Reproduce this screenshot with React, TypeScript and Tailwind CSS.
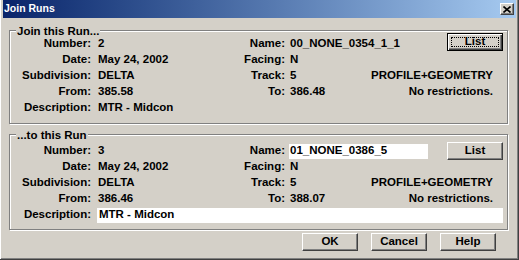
import React from "react";

const raised =
  "border border-t-white border-l-white border-r-[#404040] border-b-[#404040] shadow-[inset_-1px_-1px_0_#808080]";

function Btn({ label, focused, className = "" }: { label: string; focused?: boolean; className?: string }) {
  if (focused) {
    return (
      <div
        className={`relative flex items-center justify-center h-[18px] w-[56px] border border-black shadow-[inset_1px_1px_0_#ffffff,inset_-1px_-1px_0_#404040,inset_-2px_-2px_0_#808080] ${className}`}
      >
        <span className="absolute inset-[3px] border border-dotted border-black" />
        <span className="relative leading-none">{label}</span>
      </div>
    );
  }
  return (
    <div className={`flex items-center justify-center h-[18px] w-[56px] ${raised} ${className}`}>
      <span className="leading-none">{label}</span>
    </div>
  );
}

type Row = {
  l1: string;
  v1: React.ReactNode;
  l2?: string;
  v2?: React.ReactNode;
  right?: React.ReactNode;
};

function Group({
  legend,
  rows,
  className,
}: {
  legend: string;
  rows: Row[];
  className: string;
}) {
  return (
    <div
      className={`relative ml-[6px] w-[499px] border border-[#808080] shadow-[1px_1px_0_#ffffff,inset_1px_1px_0_#ffffff] ${className}`}
    >
      <span className="absolute top-[-8px] left-[6px] px-[1px] bg-[#d4d0c8] leading-[16px]">{legend}</span>
      {rows.map((r, i) => (
        <div key={i} className="flex items-center h-[16px] pr-[4px]">
          <div className="w-[81px] text-right whitespace-nowrap">{r.l1}</div>
          {r.l2 !== undefined ? (
            <>
              <div className="ml-[7px] w-[110px] whitespace-nowrap">{r.v1}</div>
              <div className="w-[77px] text-right">{r.l2}</div>
              <div className="ml-[5px] flex-1 whitespace-nowrap">{r.v2}</div>
              {r.right}
            </>
          ) : (
            <div className="ml-[7px] flex-1 flex whitespace-nowrap">{r.v1}</div>
          )}
        </div>
      ))}
    </div>
  );
}

export default function App() {
  return (
    <div className="w-[519px] h-[260px] bg-[#d4d0c8] border-r border-b border-[#404040] flex flex-col font-['Liberation_Sans',Arial,sans-serif] text-[11.5px] font-bold text-black overflow-hidden">
      <div className="flex-1 flex flex-col pl-[3px] pr-[2px] shadow-[inset_1px_0_0_#ffffff,inset_-1px_-1px_0_#808080]">
        <div className="h-[18px] flex items-center bg-gradient-to-r from-[#0a246a] to-[#a6caf0]">
          <span className="pl-[1px] text-white text-[10.5px] font-bold">Join Runs</span>
          <div className="flex-1" />
          <div className={`mr-[2px] w-[14px] h-[12px] bg-[#d4d0c8] flex items-center justify-center ${raised}`}>
            <svg width="8" height="7" viewBox="0 0 8 7">
              <path d="M0.5 0.5 L7.5 6.5 M7.5 0.5 L0.5 6.5" stroke="#000" strokeWidth="1.6" />
            </svg>
          </div>
        </div>

        <Group
          legend="Join this Run..."
          className="mt-[12px] h-[94px] pt-[5px]"
          rows={[
            {
              l1: "Number:",
              v1: "2",
              l2: "Name:",
              v2: "00_NONE_0354_1_1",
              right: <Btn label="List" focused className="-mt-[4px]" />,
            },
            { l1: "Date:", v1: "May 24, 2002", l2: "Facing:", v2: "N" },
            {
              l1: "Subdivision:",
              v1: "DELTA",
              l2: "Track:",
              v2: "5",
              right: <span className="mr-[10px]">PROFILE+GEOMETRY</span>,
            },
            {
              l1: "From:",
              v1: "385.58",
              l2: "To:",
              v2: "386.48",
              right: <span className="mr-[10px]">No restrictions.</span>,
            },
            { l1: "Description:", v1: "MTR - Midcon" },
          ]}
        />

        <Group
          legend="...to this Run"
          className="mt-[10px] h-[96px] pt-[8px]"
          rows={[
            {
              l1: "Number:",
              v1: "3",
              l2: "Name:",
              v2: (
                <div className="-ml-[1px] w-[139px] h-[15px] pl-[1px] bg-white flex items-center">01_NONE_0386_5</div>
              ),
              right: <Btn label="List" />,
            },
            { l1: "Date:", v1: "May 24, 2002", l2: "Facing:", v2: "N" },
            {
              l1: "Subdivision:",
              v1: "DELTA",
              l2: "Track:",
              v2: "5",
              right: <span className="mr-[10px]">PROFILE+GEOMETRY</span>,
            },
            {
              l1: "From:",
              v1: "386.46",
              l2: "To:",
              v2: "388.07",
              right: <span className="mr-[10px]">No restrictions.</span>,
            },
            {
              l1: "Description:",
              v1: (
                <div className="-ml-[1px] flex-1 h-[15px] pl-[2px] bg-white flex items-center">MTR - Midcon</div>
              ),
            },
          ]}
        />

        <div className="mt-[3px] flex justify-end gap-[13px] pr-[20px]">
          <Btn label="OK" className="w-[55px]" />
          <Btn label="Cancel" className="w-[56px]" />
          <Btn label="Help" className="w-[55px]" />
        </div>
      </div>
    </div>
  );
}
